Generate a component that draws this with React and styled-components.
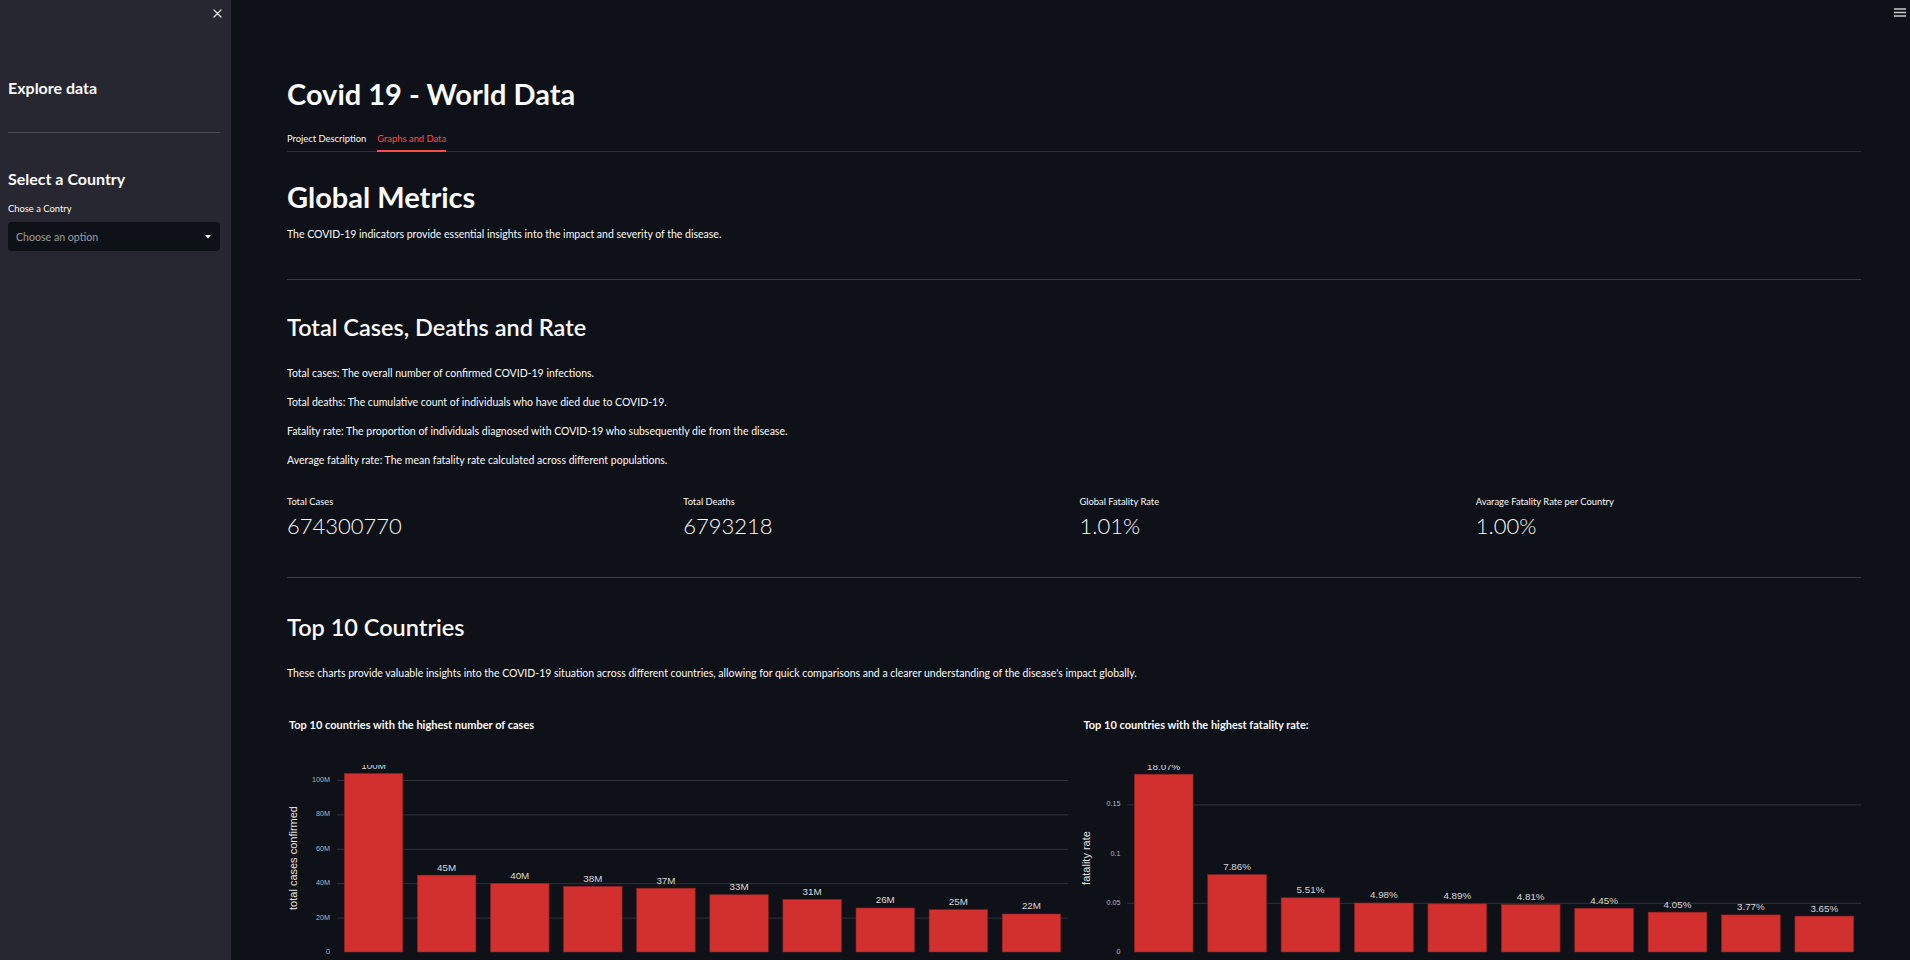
import React from "react";
import styled, { createGlobalStyle } from "styled-components";

const GlobalStyle = createGlobalStyle`
    html, body {
        margin: 0;
        padding: 0;
        background: #0e1117;
    }
    body {
        font-family: "Source Sans Pro", Lato, "Noto Sans", sans-serif;
        color: #fafafa;
        overflow: hidden;
    }
    * {
        box-sizing: border-box;
    }
`;

const casesData = [
    { value: 103.8, text: "100M" },
    { value: 44.7, text: "45M" },
    { value: 39.9, text: "40M" },
    { value: 38.2, text: "38M" },
    { value: 37.1, text: "37M" },
    { value: 33.3, text: "33M" },
    { value: 30.6, text: "31M" },
    { value: 25.6, text: "26M" },
    { value: 24.6, text: "25M" },
    { value: 22.1, text: "22M" },
];

const rateData = [
    { value: 0.1807, text: "18.07%" },
    { value: 0.0786, text: "7.86%" },
    { value: 0.0551, text: "5.51%" },
    { value: 0.0498, text: "4.98%" },
    { value: 0.0489, text: "4.89%" },
    { value: 0.0481, text: "4.81%" },
    { value: 0.0445, text: "4.45%" },
    { value: 0.0405, text: "4.05%" },
    { value: 0.0377, text: "3.77%" },
    { value: 0.0365, text: "3.65%" },
];

const definitions = [
    "Total cases: The overall number of confirmed COVID-19 infections.",
    "Total deaths: The cumulative count of individuals who have died due to COVID-19.",
    "Fatality rate: The proportion of individuals diagnosed with COVID-19 who subsequently die from the disease.",
    "Average fatality rate: The mean fatality rate calculated across different populations.",
];

const metrics = [
    { label: "Total Cases", value: "674300770" },
    { label: "Total Deaths", value: "6793218" },
    { label: "Global Fatality Rate", value: "1.01%" },
    { label: "Avarage Fatality Rate per Country", value: "1.00%" },
];

const BASE = 252;
const PLOT_TOP = 65;

const BarChart = ({ id, title, yTitle, data, ticks, grid, scale, plotLeft, plotRight, titleX, tickX, yTitleX }) => {
    const band = (plotRight - plotLeft) / data.length;
    const bw = band * 0.8;
    const y = (v) => BASE - v * scale;
    return (
        <ChartSvg width="100%" height="300" viewBox="0 0 781 300" preserveAspectRatio="xMinYMin meet">
            <defs>
                <clipPath id={id}>
                    <rect x={plotLeft} y={PLOT_TOP} width={plotRight - plotLeft} height={BASE - PLOT_TOP + 1} />
                </clipPath>
            </defs>
            <ChartTitle x={titleX} y="29">{title}</ChartTitle>
            {grid.map((g) => (
                <line key={g} x1={plotLeft} x2={plotRight} y1={y(g) + 0.5} y2={y(g) + 0.5} stroke="#31333b" strokeWidth="1" />
            ))}
            {ticks.map((t) => (
                <TickText key={t.label} x={tickX} y={y(t.value)} textAnchor="end" dominantBaseline="middle">{t.label}</TickText>
            ))}
            <AxisTitle transform={`translate(${yTitleX} 158) rotate(-90)`} textAnchor="middle" dominantBaseline="middle">{yTitle}</AxisTitle>
            <g clipPath={`url(#${id})`}>
                {data.map((d, i) => {
                    const x = plotLeft + band * i + (band - bw) / 2;
                    const top = y(d.value);
                    return (
                        <g key={i}>
                            <rect x={x} y={top} width={bw} height={BASE - top} fill="#d1302e" stroke="#8a2222" strokeWidth="0.6" />
                            <BarLabel x={x + bw / 2} y={top - 4.5} textAnchor="middle">{d.text}</BarLabel>
                        </g>
                    );
                })}
            </g>
        </ChartSvg>
    );
};

const App = () => {
    return (
        <React.Fragment>
            <GlobalStyle />
            <Shell>
                <Sidebar>
                    <SidebarTop>
                        <CloseButton aria-label="Close sidebar">
                            <svg width="9" height="9" viewBox="0 0 9 9">
                                <path d="M1 1 L8 8 M8 1 L1 8" stroke="#e6e6e6" strokeWidth="1.3" strokeLinecap="round" />
                            </svg>
                        </CloseButton>
                    </SidebarTop>
                    <SideHeading $mt={50.2}>Explore data</SideHeading>
                    <SideDivider />
                    <SideHeading $mt={36.4}>Select a Country</SideHeading>
                    <FieldLabel>Chose a Contry</FieldLabel>
                    <SelectBox>
                        <SelectText>Choose an option</SelectText>
                        <svg width="6" height="4" viewBox="0 0 6 4">
                            <path d="M0 0 H6 L3 3.5 Z" fill="#fafafa" />
                        </svg>
                    </SelectBox>
                </Sidebar>
                <Main>
                    <MenuButton aria-label="Main menu">
                        <svg width="12" height="9" viewBox="0 0 12 9">
                            <path d="M0 1 H12 M0 4.5 H12 M0 8 H12" stroke="#c9cacd" strokeWidth="1.6" />
                        </svg>
                    </MenuButton>
                    <Content>
                        <Title>Covid 19 - World Data</Title>
                        <TabList>
                            <Tab>Project Description</Tab>
                            <Tab $active>Graphs and Data</Tab>
                        </TabList>

                        <Title $mt={27}>Global Metrics</Title>
                        <Text $mt={12}>The COVID-19 indicators provide essential insights into the impact and severity of the disease.</Text>
                        <Divider $mt={36} />

                        <Heading $mt={33.3}>Total Cases, Deaths and Rate</Heading>
                        <TextStack>
                            {definitions.map((d) => (
                                <Text key={d}>{d}</Text>
                            ))}
                        </TextStack>

                        <MetricsRow>
                            {metrics.map((m) => (
                                <Metric key={m.label}>
                                    <MetricLabel>{m.label}</MetricLabel>
                                    <MetricValue>{m.value}</MetricValue>
                                </Metric>
                            ))}
                        </MetricsRow>
                        <Divider $mt={37} />

                        <Heading $mt={34.5}>Top 10 Countries</Heading>
                        <Text $mt={24}>These charts provide valuable insights into the COVID-19 situation across different countries, allowing for quick comparisons and a clearer understanding of the disease's impact globally.</Text>

                        <ChartRow>
                            <BarChart
                                id="clip-cases"
                                title="Top 10 countries with the highest number of cases"
                                yTitle="total cases confirmed"
                                data={casesData}
                                ticks={[0, 20, 40, 60, 80, 100].map((v) => ({ value: v, label: v === 0 ? "0" : `${v}M` }))}
                                grid={[20, 40, 60, 80, 100]}
                                scale={1.72}
                                plotLeft={50}
                                plotRight={781}
                                titleX={2}
                                tickX={43}
                                yTitleX={7}
                            />
                            <BarChart
                                id="clip-rate"
                                title="Top 10 countries with the highest fatality rate:"
                                yTitle="fatality rate"
                                data={rateData}
                                ticks={[
                                    { value: 0, label: "0" },
                                    { value: 0.05, label: "0.05" },
                                    { value: 0.1, label: "0.1" },
                                    { value: 0.15, label: "0.15" },
                                ]}
                                grid={[0.05, 0.15]}
                                scale={984}
                                plotLeft={47}
                                plotRight={781}
                                titleX={3.5}
                                tickX={40.5}
                                yTitleX={7.5}
                            />
                        </ChartRow>
                    </Content>
                </Main>
            </Shell>
        </React.Fragment>
    );
};

const Shell = styled.div`
    display: flex;
    width: 100%;
    height: 100vh;
    overflow: hidden;
`;
const Sidebar = styled.aside`
    display: flex;
    flex-direction: column;
    flex-shrink: 0;
    width: 231px;
    height: 100%;
    padding: 0 11px 0 8px;
    background: #262730;
`;
const SidebarTop = styled.div`
    display: flex;
    justify-content: flex-end;
    height: 28px;
    padding: 9px 0 0;
`;
const CloseButton = styled.button`
    display: flex;
    align-items: flex-start;
    justify-content: center;
    width: 12px;
    height: 12px;
    margin-right: -3px;
    padding: 0;
    border: 0;
    background: none;
    cursor: pointer;
`;
const SideHeading = styled.h2`
    margin: ${(p) => p.$mt}px 0 0;
    font-size: 16px;
    font-weight: 700;
    line-height: 19.2px;
    color: #fafafa;
`;
const SideDivider = styled.hr`
    margin: 34.2px 0 0;
    border: 0;
    border-top: 1px solid #4a4b53;
`;
const FieldLabel = styled.label`
    margin-top: 13.9px;
    font-size: 9.4px;
    line-height: 13px;
    color: #fafafa;
`;
const SelectBox = styled.div`
    display: flex;
    align-items: center;
    justify-content: space-between;
    height: 29px;
    margin-top: 7.3px;
    padding: 0 9px 0 8px;
    border-radius: 4px;
    background: #0e1117;
`;
const SelectText = styled.span`
    font-size: 10.6px;
    color: rgba(250, 250, 250, 0.6);
`;
const Main = styled.main`
    position: relative;
    flex: 1;
    min-width: 0;
    height: 100%;
    overflow: hidden;
    background: #0e1117;
`;
const MenuButton = styled.button`
    position: absolute;
    top: 8px;
    right: 4px;
    display: flex;
    padding: 0;
    border: 0;
    background: none;
    cursor: pointer;
`;
const Content = styled.div`
    display: flex;
    flex-direction: column;
    padding: 76px 49px 0 56px;
`;
const Title = styled.h1`
    margin: ${(p) => p.$mt || 0}px 0 0;
    font-size: 29px;
    font-weight: 700;
    line-height: 35px;
    color: #fafafa;
`;
const TabList = styled.div`
    display: flex;
    gap: 11px;
    margin-top: 16px;
    border-bottom: 1px solid #2b2d35;
`;
const Tab = styled.button`
    position: relative;
    height: 24px;
    padding: 0;
    border: 0;
    background: none;
    font-family: inherit;
    font-size: 9.4px;
    line-height: 22px;
    color: ${(p) => (p.$active ? "#ff4b4b" : "#fafafa")};
    cursor: pointer;
    &::after {
        content: "";
        position: absolute;
        left: 0;
        right: 0;
        bottom: -1px;
        height: 2px;
        background: ${(p) => (p.$active ? "#ff4b4b" : "transparent")};
    }
`;
const Heading = styled.h2`
    margin: ${(p) => p.$mt}px 0 0;
    font-size: 23.5px;
    font-weight: 600;
    line-height: 28px;
    color: #fafafa;
`;
const Text = styled.p`
    margin: ${(p) => p.$mt || 0}px 0 0;
    font-size: 10.5px;
    line-height: 17px;
    color: #fafafa;
`;
const TextStack = styled.div`
    display: flex;
    flex-direction: column;
    gap: 12px;
    margin-top: 24.2px;
`;
const Divider = styled.hr`
    width: 100%;
    margin: ${(p) => p.$mt}px 0 0;
    border: 0;
    border-top: 1px solid #3b3d44;
`;
const MetricsRow = styled.div`
    display: grid;
    grid-template-columns: repeat(4, 1fr);
    gap: 11px;
    margin-top: 26px;
`;
const Metric = styled.div`
    display: flex;
    flex-direction: column;
    gap: 2.8px;
`;
const MetricLabel = styled.span`
    font-size: 9.4px;
    line-height: 13px;
    color: #fafafa;
`;
const MetricValue = styled.span`
    font-size: 22px;
    font-weight: 300;
    line-height: 29px;
    color: #fafafa;
`;
const ChartRow = styled.div`
    display: grid;
    grid-template-columns: 1fr 1fr;
    gap: 11px;
    margin-top: 18.5px;
`;
const ChartSvg = styled.svg`
    display: block;
    overflow: visible;
`;
const ChartTitle = styled.text`
    font-family: "Source Sans Pro", Lato, sans-serif;
    font-size: 11px;
    font-weight: 700;
    fill: #fafafa;
`;
const TickText = styled.text`
    font-family: "Liberation Sans", Arial, sans-serif;
    font-size: 7.2px;
    fill: #b4b6bd;
`;
const AxisTitle = styled.text`
    font-family: "Liberation Sans", Arial, sans-serif;
    font-size: 11px;
    fill: #e4e4e6;
`;
const BarLabel = styled.text`
    font-family: "Liberation Sans", Arial, sans-serif;
    font-size: 9.8px;
    fill: #d9d9dc;
`;

export default App;
